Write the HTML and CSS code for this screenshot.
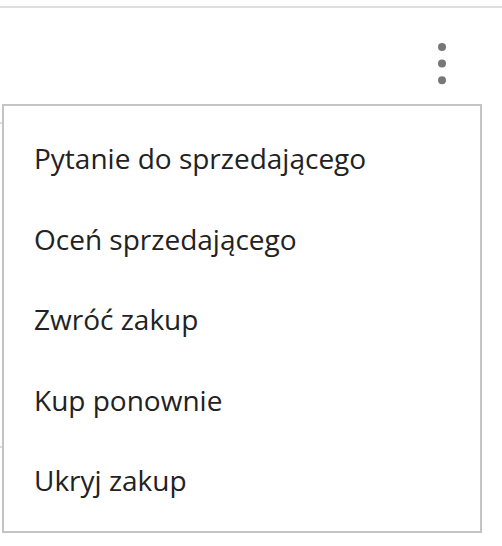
FILE: index.html
```html
<!DOCTYPE html>
<html lang="pl">
<head>
    <meta charset="UTF-8">
    <meta name="viewport" content="width=device-width, initial-scale=1.0">
    <title>Zakupy - menu</title>
    <link rel="stylesheet" href="styles.css">
</head>
<body>
    <div class="page">
        <div class="top-bar"></div>

        <div class="toolbar">
            <button type="button" class="more-btn" aria-label="Więcej">
                <svg width="24" height="50" viewBox="0 0 24 50">
                    <circle cx="12" cy="8" r="4" fill="#777777"/>
                    <circle cx="12" cy="24.6" r="4" fill="#777777"/>
                    <circle cx="12" cy="41.3" r="4" fill="#777777"/>
                </svg>
            </button>
        </div>

        <div class="orders">
            <div class="order-row"></div>
            <div class="order-row"></div>
        </div>

        <ul class="dropdown">
            <li class="dropdown-item">Pytanie do sprzedającego</li>
            <li class="dropdown-item">Oceń sprzedającego</li>
            <li class="dropdown-item">Zwróć zakup</li>
            <li class="dropdown-item">Kup ponownie</li>
            <li class="dropdown-item">Ukryj zakup</li>
        </ul>
    </div>
</body>
</html>
```

FILE: styles.css
```css
* {
    margin: 0;
    padding: 0;
    box-sizing: border-box;
    font-family: 'Open Sans', 'Noto Sans', sans-serif;
}

body {
    background-color: #FFFFFF;
    width: 502px;
    height: 546px;
    overflow: hidden;
}

.page {
    position: relative;
    height: 100%;
    overflow: hidden;
}

.top-bar {
    height: 8px;
    border-bottom: 2px solid #DEDEDE;
}

.toolbar {
    display: flex;
    justify-content: flex-end;
    padding-right: 48px;
    padding-top: 31px;
}

.more-btn {
    background: none;
    border: none;
    display: block;
    cursor: pointer;
}

.more-btn svg {
    display: block;
}

.orders {
    margin-top: 33px;
    width: 460px;
}

.order-row {
    height: 324px;
    border-top: 2px solid #DEDEDE;
}

.order-row + .order-row {
    height: 60px;
}

.dropdown {
    position: absolute;
    top: 104px;
    left: 2px;
    width: 480px;
    height: 429px;
    list-style: none;
    background-color: #FFFFFF;
    border: 2px solid #C4C4C4;
    padding: 12px 0 8px 30px;
}

.dropdown-item {
    font-size: 28px;
    line-height: 80.5px;
    color: #222222;
    cursor: pointer;
    white-space: nowrap;
}
```
